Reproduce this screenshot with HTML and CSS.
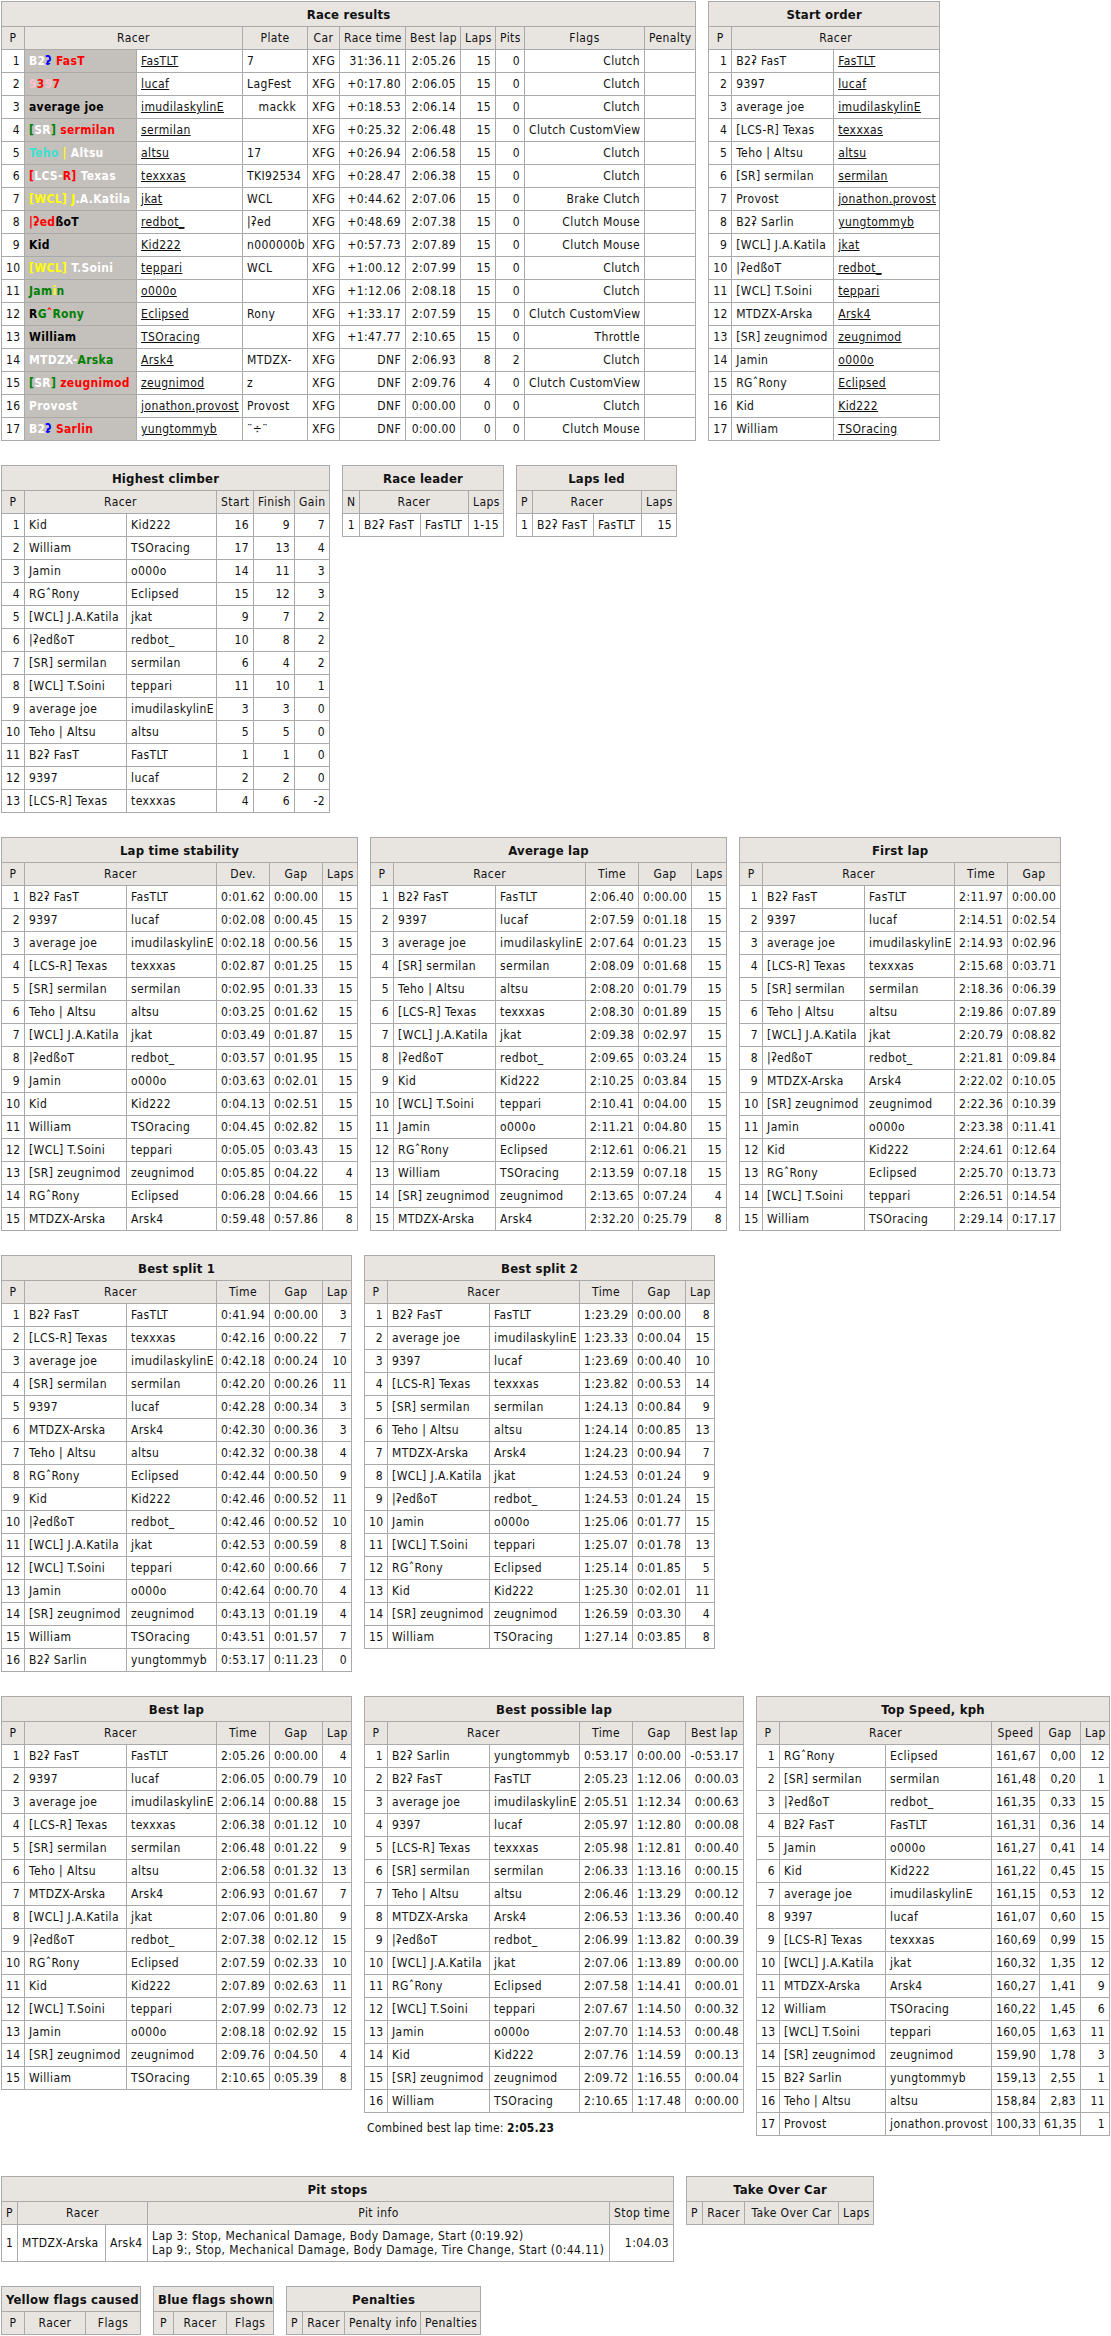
FILE: index.html
```html
<!DOCTYPE html>
<html lang="en">
<head>
<meta charset="utf-8">
<title>Race results</title>
<link rel="stylesheet" href="styles.css">
</head>
<body>
<section class="line">
<table class="stats results" width="695">
<colgroup><col width="23"><col width="112"><col width="106"><col width="65"><col width="32"><col width="66"><col width="55"><col width="35"><col width="29"><col width="120"><col width="51"></colgroup>
<thead><tr><th class="title" colspan="11">Race results</th></tr>
<tr><th>P</th><th colspan="2">Racer</th><th>Plate</th><th>Car</th><th>Race time</th><th>Best lap</th><th>Laps</th><th>Pits</th><th>Flags</th><th>Penalty</th></tr></thead>
<tbody>
<tr><td>1</td><td class="tag"><span class="w">B2</span><span class="b">ʡ</span> <span class="r">FasT</span></td><td><a href="#">FasTLT</a></td><td>7</td><td>XFG</td><td>31:36.11</td><td>2:05.26</td><td>15</td><td>0</td><td>Clutch</td><td></td></tr>
<tr><td>2</td><td class="tag"><span class="p">9</span><span class="r">3</span><span class="p">9</span><span class="r">7</span></td><td><a href="#">lucaf</a></td><td>LagFest</td><td>XFG</td><td>+0:17.80</td><td>2:06.05</td><td>15</td><td>0</td><td>Clutch</td><td></td></tr>
<tr><td>3</td><td class="tag">average joe</td><td><a href="#">imudilaskylinE</a></td><td>&nbsp;&nbsp;&nbsp;mackk</td><td>XFG</td><td>+0:18.53</td><td>2:06.14</td><td>15</td><td>0</td><td>Clutch</td><td></td></tr>
<tr><td>4</td><td class="tag"><span class="g">[</span><span class="w">SR</span><span class="g">]</span> <span class="r">sermilan</span></td><td><a href="#">sermilan</a></td><td></td><td>XFG</td><td>+0:25.32</td><td>2:06.48</td><td>15</td><td>0</td><td>Clutch CustomView</td><td></td></tr>
<tr><td>5</td><td class="tag"><span class="c">Teho</span> <span class="y">|</span> <span class="w">Altsu</span></td><td><a href="#">altsu</a></td><td>17</td><td>XFG</td><td>+0:26.94</td><td>2:06.58</td><td>15</td><td>0</td><td>Clutch</td><td></td></tr>
<tr><td>6</td><td class="tag"><span class="r">[</span><span class="w">LCS-</span><span class="r">R]</span> <span class="w">Texas</span></td><td><a href="#">texxxas</a></td><td>TKI92534</td><td>XFG</td><td>+0:28.47</td><td>2:06.38</td><td>15</td><td>0</td><td>Clutch</td><td></td></tr>
<tr><td>7</td><td class="tag"><span class="y">[WCL] J</span><span class="w">.A.Katila</span></td><td><a href="#">jkat</a></td><td>WCL</td><td>XFG</td><td>+0:44.62</td><td>2:07.06</td><td>15</td><td>0</td><td>Brake Clutch</td><td></td></tr>
<tr><td>8</td><td class="tag"><span class="r">|ʡed</span>ßoT</td><td><a href="#">redbot_</a></td><td>|ʡed</td><td>XFG</td><td>+0:48.69</td><td>2:07.38</td><td>15</td><td>0</td><td>Clutch Mouse</td><td></td></tr>
<tr><td>9</td><td class="tag">Kid</td><td><a href="#">Kid222</a></td><td>n000000b</td><td>XFG</td><td>+0:57.73</td><td>2:07.89</td><td>15</td><td>0</td><td>Clutch Mouse</td><td></td></tr>
<tr><td>10</td><td class="tag"><span class="y">[WCL]</span> <span class="w">T.Soini</span></td><td><a href="#">teppari</a></td><td>WCL</td><td>XFG</td><td>+1:00.12</td><td>2:07.99</td><td>15</td><td>0</td><td>Clutch</td><td></td></tr>
<tr><td>11</td><td class="tag"><span class="g">Jam</span><span class="y">i</span><span class="g">n</span></td><td><a href="#">o000o</a></td><td></td><td>XFG</td><td>+1:12.06</td><td>2:08.18</td><td>15</td><td>0</td><td>Clutch</td><td></td></tr>
<tr><td>12</td><td class="tag">R<span class="g">G</span><span class="r">ˆ</span><span class="g">Rony</span></td><td><a href="#">Eclipsed</a></td><td>Rony</td><td>XFG</td><td>+1:33.17</td><td>2:07.59</td><td>15</td><td>0</td><td>Clutch CustomView</td><td></td></tr>
<tr><td>13</td><td class="tag">William</td><td><a href="#">TSOracing</a></td><td></td><td>XFG</td><td>+1:47.77</td><td>2:10.65</td><td>15</td><td>0</td><td>Throttle</td><td></td></tr>
<tr><td>14</td><td class="tag"><span class="w">MTDZX-</span><span class="g">Arska</span></td><td><a href="#">Arsk4</a></td><td>MTDZX-</td><td>XFG</td><td>DNF</td><td>2:06.93</td><td>8</td><td>2</td><td>Clutch</td><td></td></tr>
<tr><td>15</td><td class="tag"><span class="g">[</span><span class="w">SR</span><span class="g">]</span> <span class="r">zeugnimod</span></td><td><a href="#">zeugnimod</a></td><td>z</td><td>XFG</td><td>DNF</td><td>2:09.76</td><td>4</td><td>0</td><td>Clutch CustomView</td><td></td></tr>
<tr><td>16</td><td class="tag"><span class="w">Provost</span></td><td><a href="#">jonathon.provost</a></td><td>Provost</td><td>XFG</td><td>DNF</td><td>0:00.00</td><td>0</td><td>0</td><td>Clutch</td><td></td></tr>
<tr><td>17</td><td class="tag"><span class="w">B2</span><span class="b">ʡ</span> <span class="r">Sarlin</span></td><td><a href="#">yungtommyb</a></td><td>¨÷¨</td><td>XFG</td><td>DNF</td><td>0:00.00</td><td>0</td><td>0</td><td>Clutch Mouse</td><td></td></tr>
</tbody>
</table>
<table class="stats" width="232">
<colgroup><col width="23"><col width="102"><col width="106"></colgroup>
<thead><tr><th class="title" colspan="3">Start order</th></tr>
<tr><th>P</th><th colspan="2">Racer</th></tr></thead>
<tbody>
<tr><td>1</td><td>B2ʡ FasT</td><td><a href="#">FasTLT</a></td></tr>
<tr><td>2</td><td>9397</td><td><a href="#">lucaf</a></td></tr>
<tr><td>3</td><td>average joe</td><td><a href="#">imudilaskylinE</a></td></tr>
<tr><td>4</td><td>[LCS-R] Texas</td><td><a href="#">texxxas</a></td></tr>
<tr><td>5</td><td>Teho | Altsu</td><td><a href="#">altsu</a></td></tr>
<tr><td>6</td><td>[SR] sermilan</td><td><a href="#">sermilan</a></td></tr>
<tr><td>7</td><td>Provost</td><td><a href="#">jonathon.provost</a></td></tr>
<tr><td>8</td><td>B2ʡ Sarlin</td><td><a href="#">yungtommyb</a></td></tr>
<tr><td>9</td><td>[WCL] J.A.Katila</td><td><a href="#">jkat</a></td></tr>
<tr><td>10</td><td>|ʡedßoT</td><td><a href="#">redbot_</a></td></tr>
<tr><td>11</td><td>[WCL] T.Soini</td><td><a href="#">teppari</a></td></tr>
<tr><td>12</td><td>MTDZX-Arska</td><td><a href="#">Arsk4</a></td></tr>
<tr><td>13</td><td>[SR] zeugnimod</td><td><a href="#">zeugnimod</a></td></tr>
<tr><td>14</td><td>Jamin</td><td><a href="#">o000o</a></td></tr>
<tr><td>15</td><td>RGˆRony</td><td><a href="#">Eclipsed</a></td></tr>
<tr><td>16</td><td>Kid</td><td><a href="#">Kid222</a></td></tr>
<tr><td>17</td><td>William</td><td><a href="#">TSOracing</a></td></tr>
</tbody>
</table>
</section>

<section class="line">
<table class="stats" width="329">
<colgroup><col width="23"><col width="102"><col width="90"><col width="37"><col width="41"><col width="35"></colgroup>
<thead><tr><th class="title" colspan="6">Highest climber</th></tr>
<tr><th>P</th><th colspan="2">Racer</th><th>Start</th><th>Finish</th><th>Gain</th></tr></thead>
<tbody>
<tr><td>1</td><td>Kid</td><td>Kid222</td><td>16</td><td>9</td><td>7</td></tr>
<tr><td>2</td><td>William</td><td>TSOracing</td><td>17</td><td>13</td><td>4</td></tr>
<tr><td>3</td><td>Jamin</td><td>o000o</td><td>14</td><td>11</td><td>3</td></tr>
<tr><td>4</td><td>RGˆRony</td><td>Eclipsed</td><td>15</td><td>12</td><td>3</td></tr>
<tr><td>5</td><td>[WCL] J.A.Katila</td><td>jkat</td><td>9</td><td>7</td><td>2</td></tr>
<tr><td>6</td><td>|ʡedßoT</td><td>redbot_</td><td>10</td><td>8</td><td>2</td></tr>
<tr><td>7</td><td>[SR] sermilan</td><td>sermilan</td><td>6</td><td>4</td><td>2</td></tr>
<tr><td>8</td><td>[WCL] T.Soini</td><td>teppari</td><td>11</td><td>10</td><td>1</td></tr>
<tr><td>9</td><td>average joe</td><td>imudilaskylinE</td><td>3</td><td>3</td><td>0</td></tr>
<tr><td>10</td><td>Teho | Altsu</td><td>altsu</td><td>5</td><td>5</td><td>0</td></tr>
<tr><td>11</td><td>B2ʡ FasT</td><td>FasTLT</td><td>1</td><td>1</td><td>0</td></tr>
<tr><td>12</td><td>9397</td><td>lucaf</td><td>2</td><td>2</td><td>0</td></tr>
<tr><td>13</td><td>[LCS-R] Texas</td><td>texxxas</td><td>4</td><td>6</td><td>-2</td></tr>
</tbody>
</table>
<table class="stats" width="162">
<colgroup><col width="17"><col width="61"><col width="48"><col width="35"></colgroup>
<thead><tr><th class="title" colspan="4">Race leader</th></tr>
<tr><th>N</th><th colspan="2">Racer</th><th>Laps</th></tr></thead>
<tbody>
<tr><td>1</td><td>B2ʡ FasT</td><td>FasTLT</td><td>1-15</td></tr>
</tbody>
</table>
<table class="stats" width="161">
<colgroup><col width="16"><col width="61"><col width="48"><col width="35"></colgroup>
<thead><tr><th class="title" colspan="4">Laps led</th></tr>
<tr><th>P</th><th colspan="2">Racer</th><th>Laps</th></tr></thead>
<tbody>
<tr><td>1</td><td>B2ʡ FasT</td><td>FasTLT</td><td>15</td></tr>
</tbody>
</table>
</section>

<section class="line">
<table class="stats" width="357">
<colgroup><col width="23"><col width="102"><col width="90"><col width="53"><col width="53"><col width="35"></colgroup>
<thead><tr><th class="title" colspan="6">Lap time stability</th></tr>
<tr><th>P</th><th colspan="2">Racer</th><th>Dev.</th><th>Gap</th><th>Laps</th></tr></thead>
<tbody>
<tr><td>1</td><td>B2ʡ FasT</td><td>FasTLT</td><td>0:01.62</td><td>0:00.00</td><td>15</td></tr>
<tr><td>2</td><td>9397</td><td>lucaf</td><td>0:02.08</td><td>0:00.45</td><td>15</td></tr>
<tr><td>3</td><td>average joe</td><td>imudilaskylinE</td><td>0:02.18</td><td>0:00.56</td><td>15</td></tr>
<tr><td>4</td><td>[LCS-R] Texas</td><td>texxxas</td><td>0:02.87</td><td>0:01.25</td><td>15</td></tr>
<tr><td>5</td><td>[SR] sermilan</td><td>sermilan</td><td>0:02.95</td><td>0:01.33</td><td>15</td></tr>
<tr><td>6</td><td>Teho | Altsu</td><td>altsu</td><td>0:03.25</td><td>0:01.62</td><td>15</td></tr>
<tr><td>7</td><td>[WCL] J.A.Katila</td><td>jkat</td><td>0:03.49</td><td>0:01.87</td><td>15</td></tr>
<tr><td>8</td><td>|ʡedßoT</td><td>redbot_</td><td>0:03.57</td><td>0:01.95</td><td>15</td></tr>
<tr><td>9</td><td>Jamin</td><td>o000o</td><td>0:03.63</td><td>0:02.01</td><td>15</td></tr>
<tr><td>10</td><td>Kid</td><td>Kid222</td><td>0:04.13</td><td>0:02.51</td><td>15</td></tr>
<tr><td>11</td><td>William</td><td>TSOracing</td><td>0:04.45</td><td>0:02.82</td><td>15</td></tr>
<tr><td>12</td><td>[WCL] T.Soini</td><td>teppari</td><td>0:05.05</td><td>0:03.43</td><td>15</td></tr>
<tr><td>13</td><td>[SR] zeugnimod</td><td>zeugnimod</td><td>0:05.85</td><td>0:04.22</td><td>4</td></tr>
<tr><td>14</td><td>RGˆRony</td><td>Eclipsed</td><td>0:06.28</td><td>0:04.66</td><td>15</td></tr>
<tr><td>15</td><td>MTDZX-Arska</td><td>Arsk4</td><td>0:59.48</td><td>0:57.86</td><td>8</td></tr>
</tbody>
</table>
<table class="stats" width="357">
<colgroup><col width="23"><col width="102"><col width="90"><col width="53"><col width="53"><col width="35"></colgroup>
<thead><tr><th class="title" colspan="6">Average lap</th></tr>
<tr><th>P</th><th colspan="2">Racer</th><th>Time</th><th>Gap</th><th>Laps</th></tr></thead>
<tbody>
<tr><td>1</td><td>B2ʡ FasT</td><td>FasTLT</td><td>2:06.40</td><td>0:00.00</td><td>15</td></tr>
<tr><td>2</td><td>9397</td><td>lucaf</td><td>2:07.59</td><td>0:01.18</td><td>15</td></tr>
<tr><td>3</td><td>average joe</td><td>imudilaskylinE</td><td>2:07.64</td><td>0:01.23</td><td>15</td></tr>
<tr><td>4</td><td>[SR] sermilan</td><td>sermilan</td><td>2:08.09</td><td>0:01.68</td><td>15</td></tr>
<tr><td>5</td><td>Teho | Altsu</td><td>altsu</td><td>2:08.20</td><td>0:01.79</td><td>15</td></tr>
<tr><td>6</td><td>[LCS-R] Texas</td><td>texxxas</td><td>2:08.30</td><td>0:01.89</td><td>15</td></tr>
<tr><td>7</td><td>[WCL] J.A.Katila</td><td>jkat</td><td>2:09.38</td><td>0:02.97</td><td>15</td></tr>
<tr><td>8</td><td>|ʡedßoT</td><td>redbot_</td><td>2:09.65</td><td>0:03.24</td><td>15</td></tr>
<tr><td>9</td><td>Kid</td><td>Kid222</td><td>2:10.25</td><td>0:03.84</td><td>15</td></tr>
<tr><td>10</td><td>[WCL] T.Soini</td><td>teppari</td><td>2:10.41</td><td>0:04.00</td><td>15</td></tr>
<tr><td>11</td><td>Jamin</td><td>o000o</td><td>2:11.21</td><td>0:04.80</td><td>15</td></tr>
<tr><td>12</td><td>RGˆRony</td><td>Eclipsed</td><td>2:12.61</td><td>0:06.21</td><td>15</td></tr>
<tr><td>13</td><td>William</td><td>TSOracing</td><td>2:13.59</td><td>0:07.18</td><td>15</td></tr>
<tr><td>14</td><td>[SR] zeugnimod</td><td>zeugnimod</td><td>2:13.65</td><td>0:07.24</td><td>4</td></tr>
<tr><td>15</td><td>MTDZX-Arska</td><td>Arsk4</td><td>2:32.20</td><td>0:25.79</td><td>8</td></tr>
</tbody>
</table>
<table class="stats" width="322">
<colgroup><col width="23"><col width="102"><col width="90"><col width="53"><col width="53"></colgroup>
<thead><tr><th class="title" colspan="5">First lap</th></tr>
<tr><th>P</th><th colspan="2">Racer</th><th>Time</th><th>Gap</th></tr></thead>
<tbody>
<tr><td>1</td><td>B2ʡ FasT</td><td>FasTLT</td><td>2:11.97</td><td>0:00.00</td></tr>
<tr><td>2</td><td>9397</td><td>lucaf</td><td>2:14.51</td><td>0:02.54</td></tr>
<tr><td>3</td><td>average joe</td><td>imudilaskylinE</td><td>2:14.93</td><td>0:02.96</td></tr>
<tr><td>4</td><td>[LCS-R] Texas</td><td>texxxas</td><td>2:15.68</td><td>0:03.71</td></tr>
<tr><td>5</td><td>[SR] sermilan</td><td>sermilan</td><td>2:18.36</td><td>0:06.39</td></tr>
<tr><td>6</td><td>Teho | Altsu</td><td>altsu</td><td>2:19.86</td><td>0:07.89</td></tr>
<tr><td>7</td><td>[WCL] J.A.Katila</td><td>jkat</td><td>2:20.79</td><td>0:08.82</td></tr>
<tr><td>8</td><td>|ʡedßoT</td><td>redbot_</td><td>2:21.81</td><td>0:09.84</td></tr>
<tr><td>9</td><td>MTDZX-Arska</td><td>Arsk4</td><td>2:22.02</td><td>0:10.05</td></tr>
<tr><td>10</td><td>[SR] zeugnimod</td><td>zeugnimod</td><td>2:22.36</td><td>0:10.39</td></tr>
<tr><td>11</td><td>Jamin</td><td>o000o</td><td>2:23.38</td><td>0:11.41</td></tr>
<tr><td>12</td><td>Kid</td><td>Kid222</td><td>2:24.61</td><td>0:12.64</td></tr>
<tr><td>13</td><td>RGˆRony</td><td>Eclipsed</td><td>2:25.70</td><td>0:13.73</td></tr>
<tr><td>14</td><td>[WCL] T.Soini</td><td>teppari</td><td>2:26.51</td><td>0:14.54</td></tr>
<tr><td>15</td><td>William</td><td>TSOracing</td><td>2:29.14</td><td>0:17.17</td></tr>
</tbody>
</table>
</section>

<section class="line">
<table class="stats" width="351">
<colgroup><col width="23"><col width="102"><col width="90"><col width="53"><col width="53"><col width="29"></colgroup>
<thead><tr><th class="title" colspan="6">Best split 1</th></tr>
<tr><th>P</th><th colspan="2">Racer</th><th>Time</th><th>Gap</th><th>Lap</th></tr></thead>
<tbody>
<tr><td>1</td><td>B2ʡ FasT</td><td>FasTLT</td><td>0:41.94</td><td>0:00.00</td><td>3</td></tr>
<tr><td>2</td><td>[LCS-R] Texas</td><td>texxxas</td><td>0:42.16</td><td>0:00.22</td><td>7</td></tr>
<tr><td>3</td><td>average joe</td><td>imudilaskylinE</td><td>0:42.18</td><td>0:00.24</td><td>10</td></tr>
<tr><td>4</td><td>[SR] sermilan</td><td>sermilan</td><td>0:42.20</td><td>0:00.26</td><td>11</td></tr>
<tr><td>5</td><td>9397</td><td>lucaf</td><td>0:42.28</td><td>0:00.34</td><td>3</td></tr>
<tr><td>6</td><td>MTDZX-Arska</td><td>Arsk4</td><td>0:42.30</td><td>0:00.36</td><td>3</td></tr>
<tr><td>7</td><td>Teho | Altsu</td><td>altsu</td><td>0:42.32</td><td>0:00.38</td><td>4</td></tr>
<tr><td>8</td><td>RGˆRony</td><td>Eclipsed</td><td>0:42.44</td><td>0:00.50</td><td>9</td></tr>
<tr><td>9</td><td>Kid</td><td>Kid222</td><td>0:42.46</td><td>0:00.52</td><td>11</td></tr>
<tr><td>10</td><td>|ʡedßoT</td><td>redbot_</td><td>0:42.46</td><td>0:00.52</td><td>10</td></tr>
<tr><td>11</td><td>[WCL] J.A.Katila</td><td>jkat</td><td>0:42.53</td><td>0:00.59</td><td>8</td></tr>
<tr><td>12</td><td>[WCL] T.Soini</td><td>teppari</td><td>0:42.60</td><td>0:00.66</td><td>7</td></tr>
<tr><td>13</td><td>Jamin</td><td>o000o</td><td>0:42.64</td><td>0:00.70</td><td>4</td></tr>
<tr><td>14</td><td>[SR] zeugnimod</td><td>zeugnimod</td><td>0:43.13</td><td>0:01.19</td><td>4</td></tr>
<tr><td>15</td><td>William</td><td>TSOracing</td><td>0:43.51</td><td>0:01.57</td><td>7</td></tr>
<tr><td>16</td><td>B2ʡ Sarlin</td><td>yungtommyb</td><td>0:53.17</td><td>0:11.23</td><td>0</td></tr>
</tbody>
</table>
<table class="stats" width="351">
<colgroup><col width="23"><col width="102"><col width="90"><col width="53"><col width="53"><col width="29"></colgroup>
<thead><tr><th class="title" colspan="6">Best split 2</th></tr>
<tr><th>P</th><th colspan="2">Racer</th><th>Time</th><th>Gap</th><th>Lap</th></tr></thead>
<tbody>
<tr><td>1</td><td>B2ʡ FasT</td><td>FasTLT</td><td>1:23.29</td><td>0:00.00</td><td>8</td></tr>
<tr><td>2</td><td>average joe</td><td>imudilaskylinE</td><td>1:23.33</td><td>0:00.04</td><td>15</td></tr>
<tr><td>3</td><td>9397</td><td>lucaf</td><td>1:23.69</td><td>0:00.40</td><td>10</td></tr>
<tr><td>4</td><td>[LCS-R] Texas</td><td>texxxas</td><td>1:23.82</td><td>0:00.53</td><td>14</td></tr>
<tr><td>5</td><td>[SR] sermilan</td><td>sermilan</td><td>1:24.13</td><td>0:00.84</td><td>9</td></tr>
<tr><td>6</td><td>Teho | Altsu</td><td>altsu</td><td>1:24.14</td><td>0:00.85</td><td>13</td></tr>
<tr><td>7</td><td>MTDZX-Arska</td><td>Arsk4</td><td>1:24.23</td><td>0:00.94</td><td>7</td></tr>
<tr><td>8</td><td>[WCL] J.A.Katila</td><td>jkat</td><td>1:24.53</td><td>0:01.24</td><td>9</td></tr>
<tr><td>9</td><td>|ʡedßoT</td><td>redbot_</td><td>1:24.53</td><td>0:01.24</td><td>15</td></tr>
<tr><td>10</td><td>Jamin</td><td>o000o</td><td>1:25.06</td><td>0:01.77</td><td>15</td></tr>
<tr><td>11</td><td>[WCL] T.Soini</td><td>teppari</td><td>1:25.07</td><td>0:01.78</td><td>13</td></tr>
<tr><td>12</td><td>RGˆRony</td><td>Eclipsed</td><td>1:25.14</td><td>0:01.85</td><td>5</td></tr>
<tr><td>13</td><td>Kid</td><td>Kid222</td><td>1:25.30</td><td>0:02.01</td><td>11</td></tr>
<tr><td>14</td><td>[SR] zeugnimod</td><td>zeugnimod</td><td>1:26.59</td><td>0:03.30</td><td>4</td></tr>
<tr><td>15</td><td>William</td><td>TSOracing</td><td>1:27.14</td><td>0:03.85</td><td>8</td></tr>
</tbody>
</table>
</section>

<section class="line line-tall">
<table class="stats" width="351">
<colgroup><col width="23"><col width="102"><col width="90"><col width="53"><col width="53"><col width="29"></colgroup>
<thead><tr><th class="title" colspan="6">Best lap</th></tr>
<tr><th>P</th><th colspan="2">Racer</th><th>Time</th><th>Gap</th><th>Lap</th></tr></thead>
<tbody>
<tr><td>1</td><td>B2ʡ FasT</td><td>FasTLT</td><td>2:05.26</td><td>0:00.00</td><td>4</td></tr>
<tr><td>2</td><td>9397</td><td>lucaf</td><td>2:06.05</td><td>0:00.79</td><td>10</td></tr>
<tr><td>3</td><td>average joe</td><td>imudilaskylinE</td><td>2:06.14</td><td>0:00.88</td><td>15</td></tr>
<tr><td>4</td><td>[LCS-R] Texas</td><td>texxxas</td><td>2:06.38</td><td>0:01.12</td><td>10</td></tr>
<tr><td>5</td><td>[SR] sermilan</td><td>sermilan</td><td>2:06.48</td><td>0:01.22</td><td>9</td></tr>
<tr><td>6</td><td>Teho | Altsu</td><td>altsu</td><td>2:06.58</td><td>0:01.32</td><td>13</td></tr>
<tr><td>7</td><td>MTDZX-Arska</td><td>Arsk4</td><td>2:06.93</td><td>0:01.67</td><td>7</td></tr>
<tr><td>8</td><td>[WCL] J.A.Katila</td><td>jkat</td><td>2:07.06</td><td>0:01.80</td><td>9</td></tr>
<tr><td>9</td><td>|ʡedßoT</td><td>redbot_</td><td>2:07.38</td><td>0:02.12</td><td>15</td></tr>
<tr><td>10</td><td>RGˆRony</td><td>Eclipsed</td><td>2:07.59</td><td>0:02.33</td><td>10</td></tr>
<tr><td>11</td><td>Kid</td><td>Kid222</td><td>2:07.89</td><td>0:02.63</td><td>11</td></tr>
<tr><td>12</td><td>[WCL] T.Soini</td><td>teppari</td><td>2:07.99</td><td>0:02.73</td><td>12</td></tr>
<tr><td>13</td><td>Jamin</td><td>o000o</td><td>2:08.18</td><td>0:02.92</td><td>15</td></tr>
<tr><td>14</td><td>[SR] zeugnimod</td><td>zeugnimod</td><td>2:09.76</td><td>0:04.50</td><td>4</td></tr>
<tr><td>15</td><td>William</td><td>TSOracing</td><td>2:10.65</td><td>0:05.39</td><td>8</td></tr>
</tbody>
</table>
<div class="stack">
<table class="stats" width="380">
<colgroup><col width="23"><col width="102"><col width="90"><col width="53"><col width="53"><col width="58"></colgroup>
<thead><tr><th class="title" colspan="6">Best possible lap</th></tr>
<tr><th>P</th><th colspan="2">Racer</th><th>Time</th><th>Gap</th><th>Best lap</th></tr></thead>
<tbody>
<tr><td>1</td><td>B2ʡ Sarlin</td><td>yungtommyb</td><td>0:53.17</td><td>0:00.00</td><td>-0:53.17</td></tr>
<tr><td>2</td><td>B2ʡ FasT</td><td>FasTLT</td><td>2:05.23</td><td>1:12.06</td><td>0:00.03</td></tr>
<tr><td>3</td><td>average joe</td><td>imudilaskylinE</td><td>2:05.51</td><td>1:12.34</td><td>0:00.63</td></tr>
<tr><td>4</td><td>9397</td><td>lucaf</td><td>2:05.97</td><td>1:12.80</td><td>0:00.08</td></tr>
<tr><td>5</td><td>[LCS-R] Texas</td><td>texxxas</td><td>2:05.98</td><td>1:12.81</td><td>0:00.40</td></tr>
<tr><td>6</td><td>[SR] sermilan</td><td>sermilan</td><td>2:06.33</td><td>1:13.16</td><td>0:00.15</td></tr>
<tr><td>7</td><td>Teho | Altsu</td><td>altsu</td><td>2:06.46</td><td>1:13.29</td><td>0:00.12</td></tr>
<tr><td>8</td><td>MTDZX-Arska</td><td>Arsk4</td><td>2:06.53</td><td>1:13.36</td><td>0:00.40</td></tr>
<tr><td>9</td><td>|ʡedßoT</td><td>redbot_</td><td>2:06.99</td><td>1:13.82</td><td>0:00.39</td></tr>
<tr><td>10</td><td>[WCL] J.A.Katila</td><td>jkat</td><td>2:07.06</td><td>1:13.89</td><td>0:00.00</td></tr>
<tr><td>11</td><td>RGˆRony</td><td>Eclipsed</td><td>2:07.58</td><td>1:14.41</td><td>0:00.01</td></tr>
<tr><td>12</td><td>[WCL] T.Soini</td><td>teppari</td><td>2:07.67</td><td>1:14.50</td><td>0:00.32</td></tr>
<tr><td>13</td><td>Jamin</td><td>o000o</td><td>2:07.70</td><td>1:14.53</td><td>0:00.48</td></tr>
<tr><td>14</td><td>Kid</td><td>Kid222</td><td>2:07.76</td><td>1:14.59</td><td>0:00.13</td></tr>
<tr><td>15</td><td>[SR] zeugnimod</td><td>zeugnimod</td><td>2:09.72</td><td>1:16.55</td><td>0:00.04</td></tr>
<tr><td>16</td><td>William</td><td>TSOracing</td><td>2:10.65</td><td>1:17.48</td><td>0:00.00</td></tr>
</tbody>
</table>
<p class="note">Combined best lap time: <b>2:05.23</b></p>
</div>
<table class="stats" width="354">
<colgroup><col width="23"><col width="106"><col width="106"><col width="48"><col width="41"><col width="29"></colgroup>
<thead><tr><th class="title" colspan="6">Top Speed, kph</th></tr>
<tr><th>P</th><th colspan="2">Racer</th><th>Speed</th><th>Gap</th><th>Lap</th></tr></thead>
<tbody>
<tr><td>1</td><td>RGˆRony</td><td>Eclipsed</td><td>161,67</td><td>0,00</td><td>12</td></tr>
<tr><td>2</td><td>[SR] sermilan</td><td>sermilan</td><td>161,48</td><td>0,20</td><td>1</td></tr>
<tr><td>3</td><td>|ʡedßoT</td><td>redbot_</td><td>161,35</td><td>0,33</td><td>15</td></tr>
<tr><td>4</td><td>B2ʡ FasT</td><td>FasTLT</td><td>161,31</td><td>0,36</td><td>14</td></tr>
<tr><td>5</td><td>Jamin</td><td>o000o</td><td>161,27</td><td>0,41</td><td>14</td></tr>
<tr><td>6</td><td>Kid</td><td>Kid222</td><td>161,22</td><td>0,45</td><td>15</td></tr>
<tr><td>7</td><td>average joe</td><td>imudilaskylinE</td><td>161,15</td><td>0,53</td><td>12</td></tr>
<tr><td>8</td><td>9397</td><td>lucaf</td><td>161,07</td><td>0,60</td><td>15</td></tr>
<tr><td>9</td><td>[LCS-R] Texas</td><td>texxxas</td><td>160,69</td><td>0,99</td><td>15</td></tr>
<tr><td>10</td><td>[WCL] J.A.Katila</td><td>jkat</td><td>160,32</td><td>1,35</td><td>12</td></tr>
<tr><td>11</td><td>MTDZX-Arska</td><td>Arsk4</td><td>160,27</td><td>1,41</td><td>9</td></tr>
<tr><td>12</td><td>William</td><td>TSOracing</td><td>160,22</td><td>1,45</td><td>6</td></tr>
<tr><td>13</td><td>[WCL] T.Soini</td><td>teppari</td><td>160,05</td><td>1,63</td><td>11</td></tr>
<tr><td>14</td><td>[SR] zeugnimod</td><td>zeugnimod</td><td>159,90</td><td>1,78</td><td>3</td></tr>
<tr><td>15</td><td>B2ʡ Sarlin</td><td>yungtommyb</td><td>159,13</td><td>2,55</td><td>1</td></tr>
<tr><td>16</td><td>Teho | Altsu</td><td>altsu</td><td>158,84</td><td>2,83</td><td>11</td></tr>
<tr><td>17</td><td>Provost</td><td>jonathon.provost</td><td>100,33</td><td>61,35</td><td>1</td></tr>
</tbody>
</table>
</section>

<section class="line">
<table class="stats pits" width="673">
<colgroup><col width="16"><col width="88"><col width="42"><col width="462"><col width="64"></colgroup>
<thead><tr><th class="title" colspan="5">Pit stops</th></tr>
<tr><th>P</th><th colspan="2">Racer</th><th>Pit info</th><th>Stop time</th></tr></thead>
<tbody>
<tr><td>1</td><td>MTDZX-Arska</td><td>Arsk4</td><td>Lap 3: Stop, Mechanical Damage, Body Damage, Start (0:19.92)<br>Lap 9:, Stop, Mechanical Damage, Body Damage, Tire Change, Start (0:44.11)</td><td>1:04.03</td></tr>
</tbody>
</table>
<table class="stats" width="188">
<colgroup><col width="16"><col width="42"><col width="94"><col width="35"></colgroup>
<thead><tr><th class="title" colspan="4">Take Over Car</th></tr>
<tr><th>P</th><th>Racer</th><th>Take Over Car</th><th>Laps</th></tr></thead>
</table>
</section>

<section class="line">
<table class="stats" width="140">
<colgroup><col width="23"><col width="61"><col width="55"></colgroup>
<thead><tr><th class="title" colspan="3">Yellow flags caused</th></tr>
<tr><th>P</th><th>Racer</th><th>Flags</th></tr></thead>
</table>
<table class="stats" width="121">
<colgroup><col width="20"><col width="53"><col width="47"></colgroup>
<thead><tr><th class="title" colspan="3">Blue flags shown</th></tr>
<tr><th>P</th><th>Racer</th><th>Flags</th></tr></thead>
</table>
<table class="stats" width="195">
<colgroup><col width="16"><col width="42"><col width="76"><col width="60"></colgroup>
<thead><tr><th class="title" colspan="4">Penalties</th></tr>
<tr><th>P</th><th>Racer</th><th>Penalty info</th><th>Penalties</th></tr></thead>
</table>
</section>
</body>
</html>
```
FILE: styles.css
```css
html, body {
  margin: 0;
  padding: 0;
  background: #fff;
}

body {
  padding: 1px 0 0 1px;
  font-family: "DejaVu Sans Condensed", "DejaVu Sans", sans-serif;
  font-size: 12px;
  letter-spacing: 0.4px;
  color: #111;
}

.line {
  display: flex;
  align-items: flex-start;
  gap: 12px;
  margin-bottom: 24px;
}

.line-tall {
  margin-bottom: 40px;
}

.stack {
  display: flex;
  flex-direction: column;
}

.stats {
  border-collapse: collapse;
  table-layout: fixed;
  flex: none;
}

.stats th,
.stats td {
  border: 1px solid #aaa;
  padding: 0 4px;
  white-space: nowrap;
  overflow: visible;
  height: 22px;
  box-sizing: content-box;
  font-weight: normal;
}

.stats th {
  background: #e8e5e1;
  text-align: center;
}

.stats th.title {
  height: 24px;
  font-size: 13px;
  letter-spacing: 0.2px;
  font-weight: bold;
}

.stats td {
  text-align: right;
}

.stats td:nth-child(2),
.stats td:nth-child(3) {
  text-align: left;
}

.results td:nth-child(4),
.results td:nth-child(5),
.pits td:nth-child(4) {
  text-align: left;
}

.pits td {
  height: 36px;
  line-height: 14px;
}

.stats a {
  color: inherit;
  text-decoration: underline;
}

.stats td.tag {
  background: #c4c0bc;
  font-weight: bold;
  letter-spacing: 0.3px;
  color: #000;
}

.w { color: #fff; }
.r { color: #f00; }
.g { color: #008000; }
.y { color: #ff0; }
.b { color: #00f; }
.c { color: #40e0d0; }
.p { color: #ffc0cb; }

.note {
  margin: 8px 0 0;
  padding-left: 3px;
  letter-spacing: 0.15px;
}
```
